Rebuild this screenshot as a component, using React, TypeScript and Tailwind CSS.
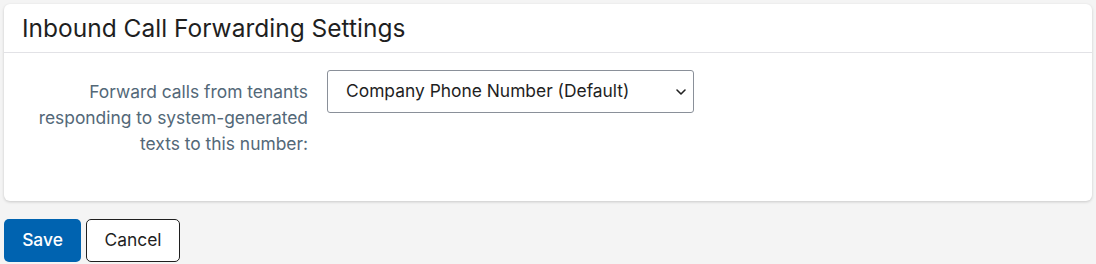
import { ChevronDown } from "lucide-react";

export default function App() {
  return (
    <div className="min-h-[264px] bg-[#f4f4f4] p-1 font-['Inter',sans-serif]">
      {/* settings card */}
      <div className="rounded-md bg-white shadow-[0_1px_3px_rgba(0,0,0,0.18)]">
        <div className="border-b border-[#e2e2e6] px-[18px] pt-[10px] pb-[9px]">
          <h2 className="text-[24.5px] leading-[29px] text-[#1f1f1f]">
            Inbound Call Forwarding Settings
          </h2>
        </div>
        <div className="flex items-start gap-[19px] px-5 pt-[17px] pb-[44px]">
          <label className="w-[284px] pt-[9px] text-right text-[17.4px] leading-[26px] text-[#536878]">
            Forward calls from tenants responding to system-generated texts to
            this number:
          </label>
          <div className="relative">
            <select className="h-[43px] w-[367px] appearance-none rounded-[3px] border border-[#8a9099] bg-white pl-[18px] pr-8 text-[17.4px] text-[#1f1f1f] outline-none">
              <option>Company Phone Number (Default)</option>
              <option>Property Phone Number</option>
            </select>
            <ChevronDown
              size={16}
              strokeWidth={2.4}
              className="pointer-events-none absolute right-[5px] top-[14px] text-[#222]"
            />
          </div>
        </div>
      </div>

      {/* actions */}
      <div className="mt-[18px] flex gap-[5px]">
        <button className="h-[43px] w-[77px] rounded-[5px] bg-[#0063b0] text-[17.4px] font-medium text-white">
          Save
        </button>
        <button className="h-[43px] w-[94px] rounded-[5px] border border-[#1f1f1f] bg-white text-[17.4px] text-[#1f1f1f]">
          Cancel
        </button>
      </div>
    </div>
  );
}
